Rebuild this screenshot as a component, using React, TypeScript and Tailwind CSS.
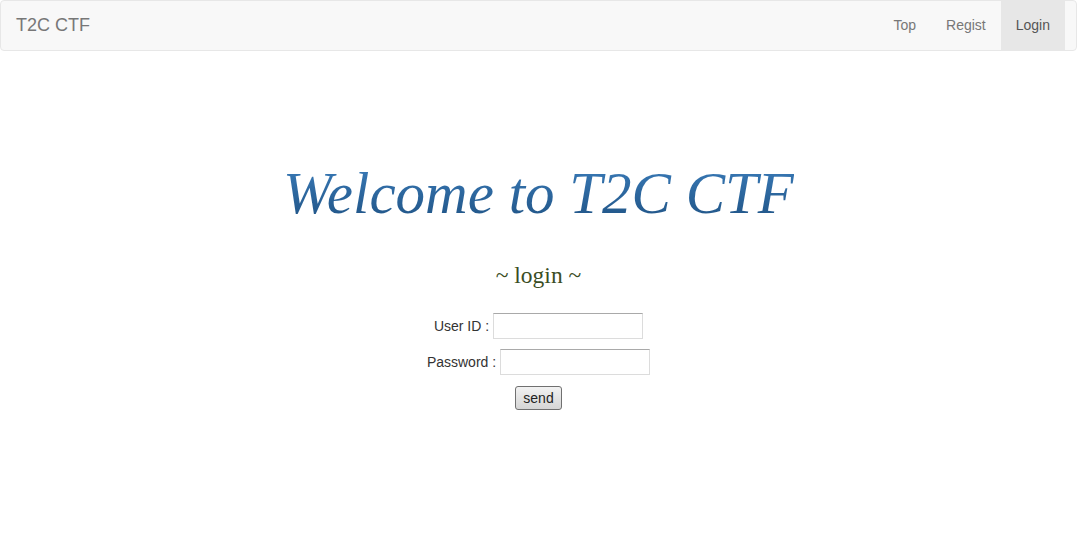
export default function App() {
  const navItems = [
    { label: "Top", active: false },
    { label: "Regist", active: false },
    { label: "Login", active: true },
  ]

  return (
    <div className="min-h-screen bg-white font-['Liberation_Sans',Arial,sans-serif] text-[14px] text-[#333]">
      {/* Navbar */}
      <nav className="flex h-[51px] items-stretch justify-between rounded-[4px] border border-[#e7e7e7] bg-[#f8f8f8]">
        <a className="flex items-center px-[15px] text-[18px] text-[#777]">T2C CTF</a>
        <ul className="mr-[11px] flex items-stretch">
          {navItems.map((item) => (
            <li
              key={item.label}
              className={`flex items-center px-[15px] ${item.active ? "bg-[#e7e7e7] text-[#555]" : "text-[#777]"}`}
            >
              {item.label}
            </li>
          ))}
        </ul>
      </nav>

      <div className="flex flex-col items-center">
        <h1 className="mt-[110px] bg-gradient-to-b from-[#3b7dbb] to-[#1f5283] bg-clip-text font-['Liberation_Serif','Times_New_Roman',serif] text-[59px] italic leading-[64px] text-transparent">
          Welcome to T2C CTF
        </h1>

        <h3 className="mt-[37px] font-['Liberation_Serif','Times_New_Roman',serif] text-[23.5px] leading-[26px] text-[#3a4d24]">
          ~ login ~
        </h3>

        <form className="mt-[25px] flex flex-col items-center gap-[10px]">
          <div className="flex items-center gap-[4px]">
            <label>User ID :</label>
            <input
              type="text"
              className="h-[26px] w-[150px] border border-[#dcdcdc] border-t-[#a9a9a9] bg-white outline-none"
            />
          </div>
          <div className="flex items-center gap-[4px]">
            <label>Password :</label>
            <input
              type="password"
              className="h-[26px] w-[150px] border border-[#dcdcdc] border-t-[#a9a9a9] bg-white outline-none"
            />
          </div>
          <button
            type="button"
            className="mt-[1px] h-[24px] w-[47px] rounded-[3px] border border-[#707070] bg-gradient-to-b from-[#f2f2f2] to-[#d5d5d5] text-[14px] leading-none text-[#222]"
          >
            send
          </button>
        </form>
      </div>
    </div>
  )
}
